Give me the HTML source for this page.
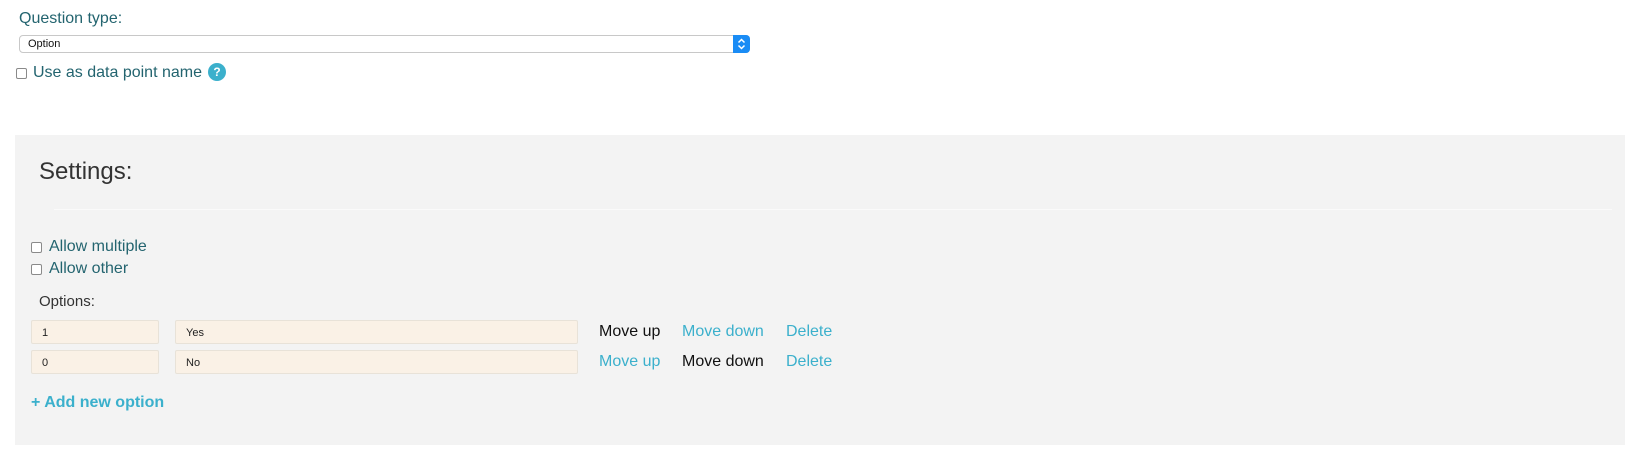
<!DOCTYPE html>
<html><head><meta charset="utf-8"><style>
*{box-sizing:border-box;margin:0;padding:0}
body{width:1638px;height:457px;background:#fff;font-family:"Liberation Sans",Helvetica,Arial,sans-serif;position:relative;overflow:hidden}
.a{position:absolute;white-space:nowrap}
.teal{color:#23646f}
.cb{position:absolute;width:11px;height:11px;border:1px solid #8a8a8a;border-radius:2px;background:#fff}
.inp{position:absolute;height:24px;background:#faf1e6;border:1px solid #e8e2d8;border-radius:2px;font-size:11px;padding-left:10px;line-height:24px;color:#222}
.lk{color:#3bb0cc}
</style></head><body>
<div class="a teal" style="left:19px;top:10px;font-size:16px">Question type:</div>
<div class="a" style="left:19px;top:35px;width:731px;height:18px;border:1px solid #c8c8c8;border-radius:4px;background:#fff;font-size:11px;line-height:17px;padding-left:8px;color:#111">Option</div>
<div class="a" style="left:733px;top:35px;width:17px;height:18px;background:#1a8cf5;border-radius:0 4px 4px 0"><svg width="17" height="18" viewBox="0 0 17 18"><path d="M5.5 7.5L8.5 4.5L11.5 7.5M5.5 10.5L8.5 13.5L11.5 10.5" stroke="#fff" stroke-width="1.5" fill="none"/></svg></div>
<div class="cb" style="left:16px;top:68px"></div>
<div class="a teal" style="left:33px;top:64px;font-size:16px">Use as data point name</div>
<div class="a" style="left:208px;top:63px;width:18px;height:18px;border-radius:50%;background:#3bb0cc;color:#fff;font-size:12px;font-weight:bold;text-align:center;line-height:18px">?</div>
<div class="a" style="left:15px;top:135px;width:1610px;height:310px;background:#f3f3f3"></div>
<div class="a" style="left:39px;top:158px;font-size:24px;color:#333">Settings:</div>
<div class="a" style="left:54px;top:209px;width:1558px;height:1px;background:#ddd;border-bottom:1px solid #fafafa"></div>
<div class="cb" style="left:31px;top:242px"></div>
<div class="a teal" style="left:49px;top:238px;font-size:16px">Allow multiple</div>
<div class="cb" style="left:31px;top:264px"></div>
<div class="a teal" style="left:49px;top:260px;font-size:16px">Allow other</div>
<div class="a" style="left:39px;top:293px;font-size:15px;color:#333">Options:</div>
<div class="inp" style="left:31px;top:320px;width:128px">1</div>
<div class="inp" style="left:175px;top:320px;width:403px">Yes</div>
<div class="inp" style="left:31px;top:350px;width:128px">0</div>
<div class="inp" style="left:175px;top:350px;width:403px">No</div>
<div class="a" style="left:599px;top:323px;font-size:16px;color:#111">Move up</div>
<div class="a lk" style="left:682px;top:323px;font-size:16px">Move down</div>
<div class="a lk" style="left:786px;top:323px;font-size:16px">Delete</div>
<div class="a lk" style="left:599px;top:353px;font-size:16px">Move up</div>
<div class="a" style="left:682px;top:353px;font-size:16px;color:#111">Move down</div>
<div class="a lk" style="left:786px;top:353px;font-size:16px">Delete</div>
<div class="a lk" style="left:31px;top:394px;font-size:16px;font-weight:bold">+ Add new option</div>
</body></html>
